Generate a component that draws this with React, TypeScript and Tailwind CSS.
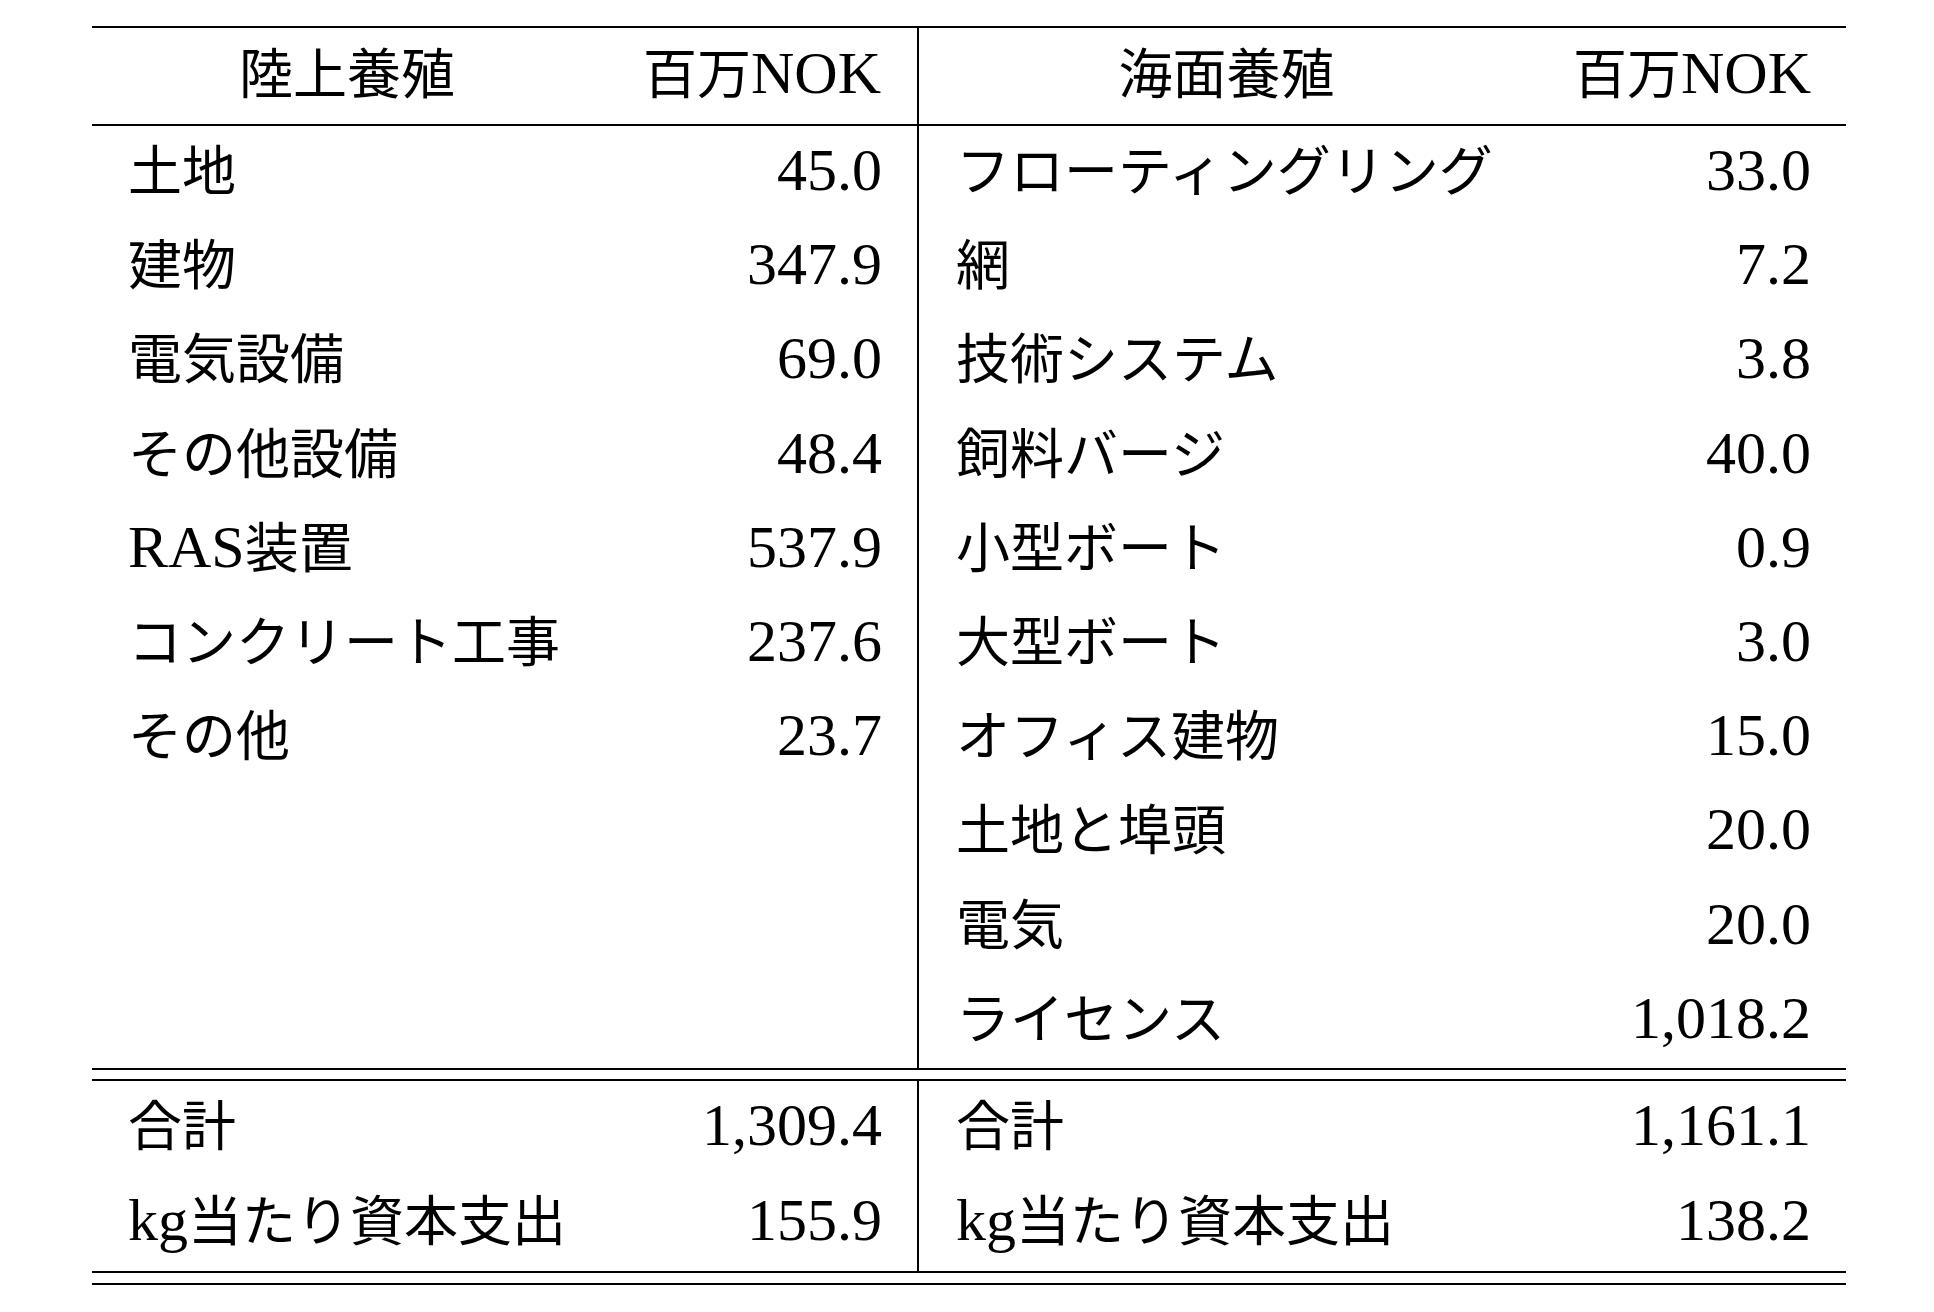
import React from 'react'

const cjk = '"Noto Sans CJK JP", sans-serif'
const latin = '"Liberation Serif", "Noto Sans CJK JP", serif'

type Row = { label: React.ReactNode; value: string }

const J = ({ children }: { children: React.ReactNode }) => (
  <span className="text-[54px] mb-[5px] font-[Noto_Sans_CJK_JP]">{children}</span>
)
const L = ({ children }: { children: React.ReactNode }) => (
  <span className="text-[60px] font-['Liberation_Serif']">{children}</span>
)

const land: Row[] = [
  { label: <J>土地</J>, value: '45.0' },
  { label: <J>建物</J>, value: '347.9' },
  { label: <J>電気設備</J>, value: '69.0' },
  { label: <J>その他設備</J>, value: '48.4' },
  { label: <><L>RAS</L><J>装置</J></>, value: '537.9' },
  { label: <J>コンクリート工事</J>, value: '237.6' },
  { label: <J>その他</J>, value: '23.7' },
]

const sea: Row[] = [
  { label: <J>フローティングリング</J>, value: '33.0' },
  { label: <J>網</J>, value: '7.2' },
  { label: <J>技術システム</J>, value: '3.8' },
  { label: <J>飼料バージ</J>, value: '40.0' },
  { label: <J>小型ボート</J>, value: '0.9' },
  { label: <J>大型ボート</J>, value: '3.0' },
  { label: <J>オフィス建物</J>, value: '15.0' },
  { label: <J>土地と埠頭</J>, value: '20.0' },
  { label: <J>電気</J>, value: '20.0' },
  { label: <J>ライセンス</J>, value: '1,018.2' },
]

const totals: [Row, Row][] = [
  [
    { label: <J>合計</J>, value: '1,309.4' },
    { label: <J>合計</J>, value: '1,161.1' },
  ],
  [
    { label: <><L>kg</L><J>当たり資本支出</J></>, value: '155.9' },
    { label: <><L>kg</L><J>当たり資本支出</J></>, value: '138.2' },
  ],
]

function Cells({ row, right, h }: { row?: Row; right?: boolean; h: string }) {
  return (
    <>
      <div
        className={`${h} flex items-center pb-[6px] text-black ${right ? 'border-l-2 border-black pl-[37px]' : 'pl-[36px]'}`}
      >
        {row?.label}
      </div>
      <div className={`${h} flex items-center justify-end pb-[6px] pr-[35px] text-black`}>
        {row && <L>{row.value}</L>}
      </div>
    </>
  )
}

export default function App() {
  const body = Array.from({ length: 10 }, (_, i) => i)
  return (
    <div className="w-[1934px] h-[1312px] bg-white" style={{ fontFamily: latin }}>
      <div className="pt-[26px] pl-[92px]">
        <div className="w-[1754px] border-t-2 border-black" style={{ fontFamily: cjk }}>
          {/* header */}
          <div className="grid grid-cols-[514px_311px_617px_312px] border-b-2 border-black">
            <div className="h-[96px] flex items-center justify-center pb-[6px] pr-[4px]">
              <J>陸上養殖</J>
            </div>
            <div className="h-[96px] flex items-center justify-end pb-[6px] pr-[36px]">
              <J>百万</J>
              <L>NOK</L>
            </div>
            <div className="h-[96px] flex items-center justify-center pb-[6px] border-l-2 border-black">
              <J>海面養殖</J>
            </div>
            <div className="h-[96px] flex items-center justify-end pb-[6px] pr-[35px]">
              <J>百万</J>
              <L>NOK</L>
            </div>
          </div>
          {/* body */}
          <div className="grid grid-cols-[514px_311px_617px_312px] border-b-2 border-black">
            {body.map((i) => (
              <React.Fragment key={i}>
                <Cells row={land[i]} h="h-[94.2px]" />
                <Cells row={sea[i]} right h="h-[94.2px]" />
              </React.Fragment>
            ))}
          </div>
          <div className="h-[9px]" />
          {/* totals */}
          <div className="grid grid-cols-[514px_311px_617px_312px] border-t-2 border-b-2 border-black">
            {totals.map(([a, b], i) => (
              <React.Fragment key={i}>
                <Cells row={a} h="h-[95px]" />
                <Cells row={b} right h="h-[95px]" />
              </React.Fragment>
            ))}
          </div>
          <div className="h-[10px]" />
          <div className="border-t-2 border-black" />
        </div>
      </div>
    </div>
  )
}
